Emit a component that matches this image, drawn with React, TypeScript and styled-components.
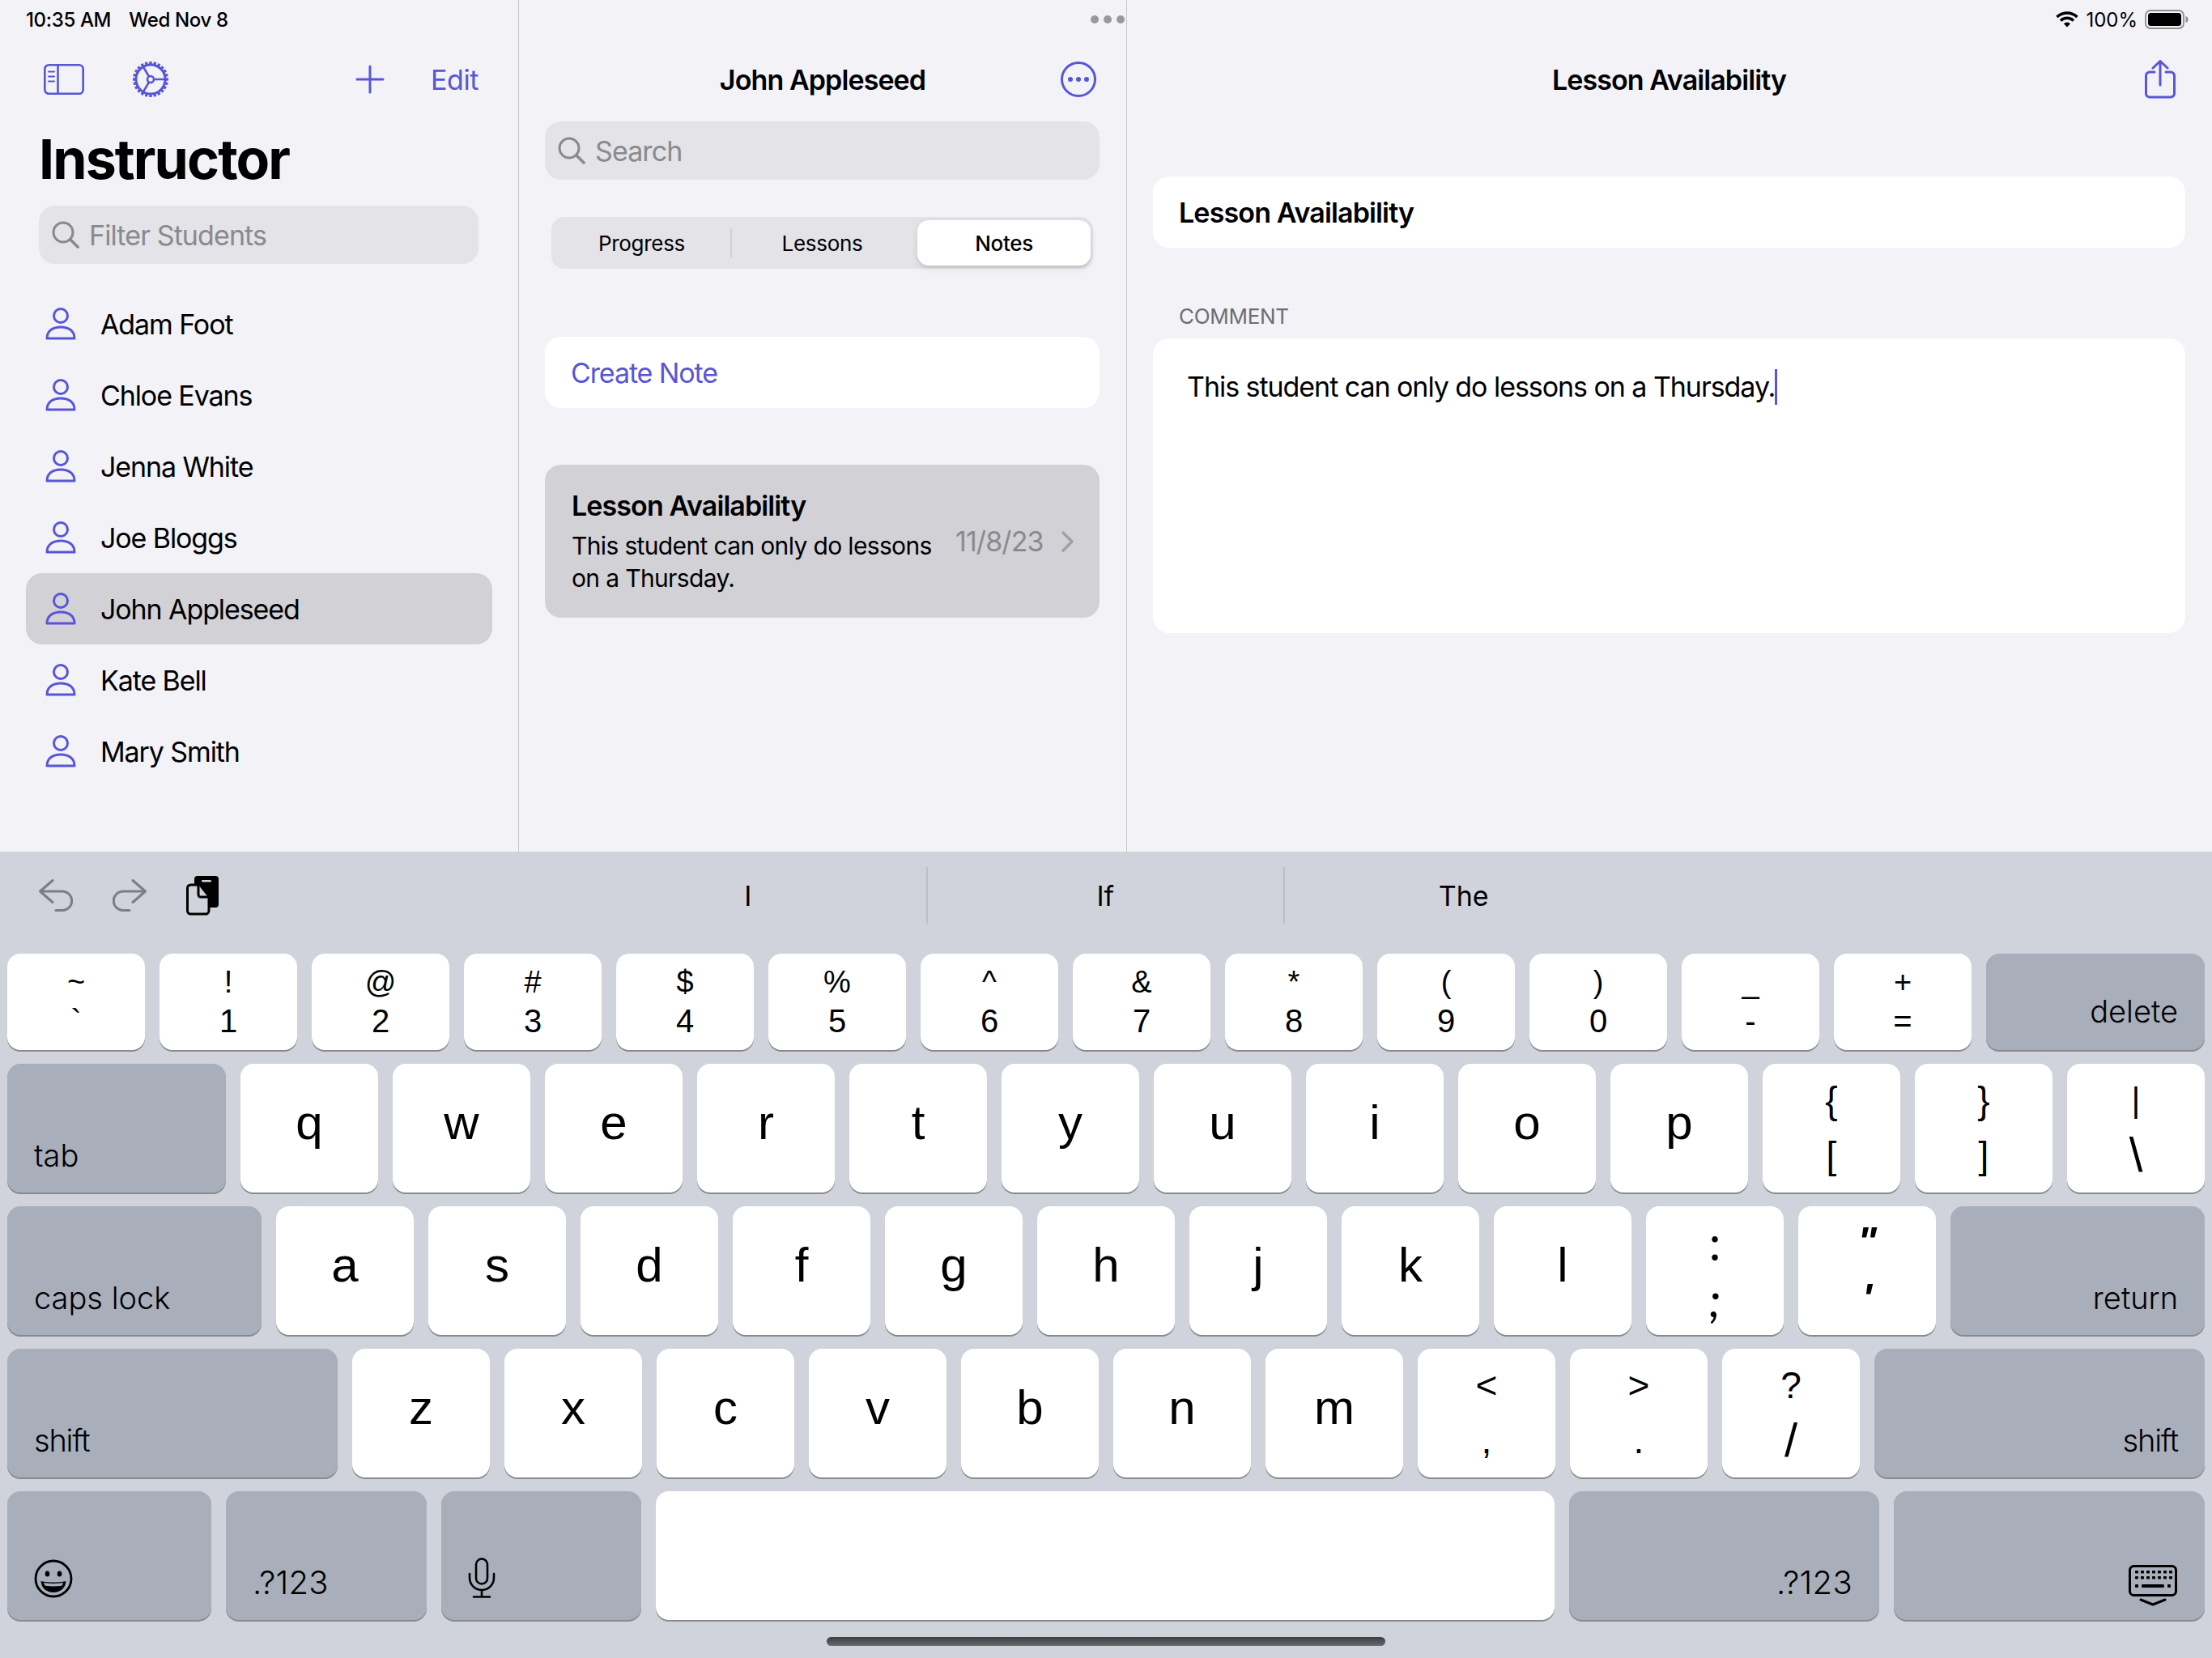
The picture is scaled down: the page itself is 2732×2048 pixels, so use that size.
import React from "react";
import styled, { createGlobalStyle } from "styled-components";

const BLUE = "#5856d6";
const HELVETICA = `"Liberation Sans", Arial, sans-serif`;

const students = ["Adam Foot", "Chloe Evans", "Jenna White", "Joe Bloggs", "John Appleseed", "Kate Bell", "Mary Smith"];

const GlobalStyle = createGlobalStyle`
  html, body {
    margin: 0;
    padding: 0;
    background: #f2f2f7;
  }
  body {
    font-family: Inter, "Liberation Sans", sans-serif;
    color: #000;
  }
  * {
    box-sizing: border-box;
  }
`;

const Screen = styled.div`
  position: relative;
  width: 2732px;
  height: 2048px;
  overflow: hidden;
  display: flex;
  flex-direction: column;
  background: #f2f2f7;
`;

const StatusBar = styled.div`
  position: absolute;
  top: 0;
  left: 0;
  right: 0;
  height: 48px;
  padding: 0 29px 0 32px;
  display: grid;
  grid-template-columns: 1fr auto 1fr;
  align-items: center;
  font-size: 24px;
`;

const StatusLeft = styled.div`
  display: flex;
  gap: 22px;
  font-weight: 500;
  letter-spacing: -0.35px;
`;

const StatusRight = styled.div`
  display: flex;
  justify-content: flex-end;
  align-items: center;
  gap: 9px;
`;

const Dots = styled.div`
  display: flex;
  gap: 6px;
`;

const Dot = styled.span`
  width: 10px;
  height: 10px;
  border-radius: 50%;
  background: #98989d;
`;

const Panes = styled.div`
  height: 1052px;
  display: flex;
`;

const Sidebar = styled.section`
  width: 641px;
  border-right: 1px solid #c6c6c8;
`;

const Middle = styled.section`
  width: 751px;
  border-right: 1px solid #c6c6c8;
`;

const Detail = styled.section`
  flex: 1;
  padding: 0 33px 0 32px;
`;

const NavBar = styled.div`
  height: 68px;
  margin-top: 64px;
  display: flex;
  align-items: center;
`;

const SidebarNav = styled(NavBar)`
  padding: 0 49px 0 54px;
`;

const CenterNav = styled(NavBar)`
  position: relative;
  justify-content: center;
`;

const NavTitle = styled.div`
  font-size: 34px;
  font-weight: 600;
  letter-spacing: -0.9px;
`;

const NavEnd = styled.div<{ $right: number }>`
  position: absolute;
  top: 50%;
  transform: translateY(-50%);
  display: flex;
  right: ${(p) => p.$right}px;
`;

const GearSlot = styled.div`
  display: flex;
  margin-left: 59px;
`;

const Spacer = styled.div`
  flex: 1;
`;

const EditLabel = styled.span`
  margin-left: 57px;
  font-size: 34px;
  color: ${BLUE};
  letter-spacing: -0.4px;
`;

const LargeTitle = styled.h1`
  margin: 0;
  height: 122px;
  padding: 28px 0 0 48px;
  font-size: 68px;
  line-height: 72px;
  font-weight: 700;
  letter-spacing: -1.9px;
`;

const SearchField = styled.div<{ $margin: string }>`
  height: 72px;
  margin: ${(p) => p.$margin};
  padding-left: 16px;
  display: flex;
  align-items: center;
  gap: 12px;
  border-radius: 20px;
  background: #e3e3e8;
  color: #8a8a8e;
  font-size: 34px;
  letter-spacing: -0.9px;
`;

const StudentList = styled.div`
  margin: 30px 32px 0;
`;

const StudentRow = styled.div<{ $selected?: boolean }>`
  height: 88px;
  padding-left: 23px;
  display: flex;
  align-items: center;
  gap: 29px;
  border-radius: 20px;
  font-size: 34px;
  letter-spacing: -1.1px;
  background: ${(p) => (p.$selected ? "#d1d1d6" : "transparent")};
`;

const Segments = styled.div`
  height: 64px;
  margin: 46px 41px 0 40px;
  display: grid;
  grid-template-columns: 1fr 1fr 1fr;
  align-items: stretch;
  border-radius: 16px;
  background: #e3e3e8;
`;

const Segment = styled.div<{ $active?: boolean; $divided?: boolean }>`
  position: relative;
  display: flex;
  align-items: center;
  justify-content: center;
  margin: ${(p) => (p.$active ? "4px 3px 4px 6px" : "0")};
  border-radius: 14px;
  font-size: 26px;
  font-weight: ${(p) => (p.$active ? 500 : 400)};
  letter-spacing: -0.3px;
  background: ${(p) => (p.$active ? "#fff" : "transparent")};
  box-shadow: ${(p) => (p.$active ? "0 3px 8px rgba(0,0,0,.12), 0 3px 1px rgba(0,0,0,.04)" : "none")};

  ${(p) =>
    p.$divided &&
    `&::after {
      content: "";
      position: absolute;
      right: 0;
      top: 14px;
      bottom: 14px;
      width: 2px;
      background: #cfcfd4;
    }`}
`;

const CreateCard = styled.div`
  height: 88px;
  margin: 84px 33px 0 32px;
  padding-left: 32px;
  display: flex;
  align-items: center;
  border-radius: 20px;
  background: #fff;
  color: ${BLUE};
  font-size: 34px;
  letter-spacing: -1.1px;
`;

const NoteCard = styled.div`
  height: 189px;
  margin: 70px 33px 0 32px;
  padding: 0 30px 0 33px;
  display: flex;
  align-items: center;
  border-radius: 20px;
  background: #d1d1d6;
`;

const NoteText = styled.div`
  width: 474px;
`;

const NoteTitle = styled.div`
  font-size: 34px;
  line-height: 44px;
  font-weight: 600;
  letter-spacing: -0.9px;
  margin: -1px 0 7px;
`;

const NoteBody = styled.div`
  font-size: 30px;
  line-height: 40px;
  letter-spacing: -0.65px;
  white-space: pre-line;
`;

const NoteDate = styled.div`
  flex: 1;
  font-size: 34px;
  color: #8a8a8e;
  letter-spacing: -0.9px;
`;

const TitleCard = styled.div`
  height: 88px;
  margin-top: 86px;
  padding-left: 32px;
  display: flex;
  align-items: center;
  border-radius: 20px;
  background: #fff;
  font-size: 34px;
  font-weight: 600;
  letter-spacing: -0.85px;
`;

const SectionLabel = styled.div`
  height: 112px;
  padding: 70px 0 0 32px;
  font-size: 26px;
  line-height: 30px;
  letter-spacing: -0.3px;
  color: #6d6d72;
`;

const CommentCard = styled.div`
  height: 364px;
  padding: 38px 42px;
  border-radius: 20px;
  background: #fff;
  font-size: 34px;
  line-height: 44px;
  letter-spacing: -1.05px;
`;

const Caret = styled.span`
  display: inline-block;
  width: 3px;
  height: 44px;
  vertical-align: top;
  background: ${BLUE};
`;

const Keyboard = styled.section`
  position: relative;
  flex: 1;
  background: #d0d3db;
  padding-left: 9px;
`;

const Assistant = styled.div`
  height: 126px;
  padding-bottom: 18px;
  display: flex;
  align-items: center;
`;

const ToolIcons = styled.div`
  width: 695px;
  padding-left: 39px;
  display: flex;
  align-items: center;
  gap: 49px;
`;

const Suggestion = styled.div<{ $divided?: boolean }>`
  width: 441.5px;
  height: 70px;
  display: flex;
  align-items: center;
  justify-content: center;
  font-size: 34px;
  border-right: ${(p) => (p.$divided ? "2px solid #bcbfc8" : "none")};
`;

const KeyRows = styled.div`
  display: flex;
  flex-direction: column;
  gap: 17px;
`;

const KeyRow = styled.div<{ $height: number }>`
  height: ${(p) => p.$height}px;
  display: flex;
  gap: 18px;
`;

const Key = styled.div<{ $width?: number; $dark?: boolean; $end?: boolean }>`
  width: ${(p) => p.$width ?? 170}px;
  flex: none;
  display: flex;
  border-radius: 16px;
  background: ${(p) => (p.$dark ? "#a9aebb" : "#fff")};
  box-shadow: 0 2px 0 #898a8f;
`;

const LetterKey = styled(Key)`
  align-items: center;
  justify-content: center;
  font-family: ${HELVETICA};
  font-size: 60px;
  padding-bottom: 14px;
`;

const PairKey = styled(Key)<{ $line: number }>`
  flex-direction: column;
  align-items: center;
  justify-content: center;
  padding-bottom: 2px;
  font-family: ${HELVETICA};
  line-height: ${(p) => p.$line}px;
`;

const Glyph = styled.span<{ $size: number; $bold?: boolean; $slant?: boolean; $round?: boolean }>`
  font-family: ${(p) => (p.$round ? `Lato, ${HELVETICA}` : "inherit")};
  font-size: ${(p) => p.$size}px;
  font-weight: ${(p) => (p.$bold ? 700 : 400)};
  font-style: ${(p) => (p.$slant ? "italic" : "normal")};
`;

const LabelKey = styled(Key)<{ $bottom?: number }>`
  align-items: flex-end;
  justify-content: ${(p) => (p.$end ? "flex-end" : "flex-start")};
  padding: 0 33px ${(p) => p.$bottom ?? 23}px;
  font-size: 38px;
  line-height: 46px;
  font-weight: 300;
`;

const NumberLabel = styled.span`
  font-size: 40px;
  letter-spacing: 0.3px;
`;

const ShiftLabel = styled.span`
  letter-spacing: -1.2px;
`;

const IconKey = styled(Key)<{ $bottom: number }>`
  align-items: flex-end;
  justify-content: ${(p) => (p.$end ? "flex-end" : "flex-start")};
  padding: 0 34px ${(p) => p.$bottom}px 33px;
`;

const HomeIndicator = styled.div`
  position: absolute;
  left: 1021px;
  bottom: 15px;
  width: 690px;
  height: 11px;
  border-radius: 6px;
  background: linear-gradient(#3d3d40, #68696d);
`;

const Chevron = () => (
  <svg width="18" height="28" viewBox="0 0 18 28" fill="none" stroke="#a0a0a5" strokeWidth="3.4" strokeLinecap="round" strokeLinejoin="round">
    <path d="M3 3l11 11L3 25" />
  </svg>
);

const SearchIcon = () => (
  <svg width="34" height="34" viewBox="0 0 34 34" fill="none" stroke="#8a8a8e" strokeWidth="3" strokeLinecap="round">
    <circle cx="14" cy="14" r="12" />
    <path d="M23 23l9 9" strokeWidth="3.6" />
  </svg>
);

const PersonIcon = () => (
  <svg width="40" height="40" viewBox="0 0 40 40" fill="none" stroke={BLUE} strokeWidth="3">
    <ellipse cx="20" cy="10" rx="8.5" ry="8.5" />
    <path d="M3 38c0-10 8-14 17-14s17 4 17 14z" strokeLinejoin="round" />
  </svg>
);

const SidebarIcon = () => (
  <svg width="50" height="38" viewBox="0 0 50 38" fill="none" stroke={BLUE} strokeWidth="2.6">
    <rect x="1.3" y="1.3" width="47.4" height="35.4" rx="5" />
    <path d="M17.5 1.5v35" />
    <path d="M6 9.5h7M6 15.5h7M6 21.5h7" strokeWidth="2" strokeLinecap="round" />
  </svg>
);

const GearIcon = () => (
  <svg width="46" height="46" viewBox="0 0 46 46" fill="none" stroke={BLUE}>
    <circle cx="23" cy="23" r="18" strokeWidth="3" />
    {Array.from({ length: 24 }, (_, i) => (
      <path key={i} d="M23 5V1" strokeWidth="3.4" transform={`rotate(${i * 15} 23 23)`} />
    ))}
    <circle cx="23" cy="23" r="4" strokeWidth="2.6" />
    <path d="M27 23h15M21 19.500L13 6M21 26.500L13 40" strokeWidth="2.6" />
  </svg>
);

const PlusIcon = () => (
  <svg width="36" height="36" viewBox="0 0 36 36" fill="none" stroke={BLUE} strokeWidth="3" strokeLinecap="round">
    <path d="M18 2v32M2 18h32" />
  </svg>
);

const MoreIcon = () => (
  <svg width="44" height="44" viewBox="0 0 44 44" fill="none">
    <circle cx="22" cy="22" r="20.500" stroke={BLUE} strokeWidth="3" />
    <circle cx="12" cy="22" r="3" fill={BLUE} />
    <circle cx="22" cy="22" r="3" fill={BLUE} />
    <circle cx="32" cy="22" r="3" fill={BLUE} />
  </svg>
);

const ShareIcon = () => (
  <svg width="38" height="48" viewBox="0 0 38 48" fill="none" stroke={BLUE} strokeWidth="3" strokeLinecap="round" strokeLinejoin="round">
    <path d="M12 15H6a4.500 4.500 0 0 0-4.500 4.500v22A4.500 4.500 0 0 0 6 46h26a4.500 4.500 0 0 0 4.500-4.500v-22A4.500 4.500 0 0 0 32 15h-6" />
    <path d="M19 31V2M10 10l9-8.500 9 8.500" />
  </svg>
);

const WifiIcon = () => (
  <svg width="28" height="20" viewBox="0 0 28 20" fill="none" stroke="#000" strokeWidth="3.400">
    <path d="M1.500 7a18 18 0 0 1 25 0" />
    <path d="M6 11.500a11.500 11.500 0 0 1 16 0" />
    <path d="M14 19.500l-4-4.200a5.600 5.600 0 0 1 8 0z" fill="#000" stroke="none" />
  </svg>
);

const BatteryIcon = () => (
  <svg width="54" height="24" viewBox="0 0 54 24" fill="none">
    <rect x="1" y="1" width="47" height="22" rx="6" stroke="#8e8e93" strokeWidth="1.800" />
    <rect x="4" y="4" width="41" height="16" rx="3.500" fill="#000" />
    <path d="M50.500 8v8c2-.6 3-2 3-4s-1-3.400-3-4z" fill="#8e8e93" />
  </svg>
);

const UndoIcon = ({ flip }: { flip?: boolean }) => (
  <svg width="42" height="40" viewBox="0 0 42 40" fill="none" stroke="#7c7e84" strokeWidth="3" strokeLinecap="round" strokeLinejoin="round" transform={flip ? "scale(-1 1)" : undefined}>
    <path d="M17 1.500L1.500 15 17 28.500M1.500 15H29a11.500 11.500 0 0 1 0 23.500h-8" />
  </svg>
);

const PasteIcon = () => (
  <svg width="42" height="50" viewBox="0 0 42 50" fill="none">
    <rect x="10" y="1" width="30" height="39" rx="4" fill="#000" />
    <rect x="19" y="6" width="12" height="2.600" rx="1.300" fill="#d0d3db" />
    <path d="M5.500 12H17l11 14v18a4 4 0 0 1-4 4H5.500a4 4 0 0 1-4-4V16a4 4 0 0 1 4-4z" fill="#d0d3db" stroke="#000" strokeWidth="3" strokeLinejoin="round" />
    <path d="M15 12v12a3 3 0 0 0 3 3h10" stroke="#000" strokeWidth="3" />
  </svg>
);

const EmojiIcon = () => (
  <svg width="48" height="48" viewBox="0 0 48 48" fill="none">
    <circle cx="24" cy="24" r="22" stroke="#000" strokeWidth="2.800" />
    <ellipse cx="16.500" cy="18" rx="2.800" ry="3.600" fill="#000" />
    <ellipse cx="31.500" cy="18" rx="2.800" ry="3.600" fill="#000" />
    <path d="M8.500 27c10 2 21 2 31 0-.5 8.500-7 14-15.500 14S9 35.500 8.500 27z" fill="#000" />
    <path d="M12 29c8 1.400 16 1.400 24 0-.4 1.500-1 2.700-1.800 3.800-6.600 1-13.800 1-20.400 0-.8-1.100-1.400-2.300-1.800-3.800z" fill="#a9aebb" />
  </svg>
);

const MicIcon = () => (
  <svg width="34" height="50" viewBox="0 0 34 50" fill="none" stroke="#000" strokeWidth="2.600" strokeLinecap="round">
    <rect x="10" y="1.500" width="14" height="31" rx="7" />
    <path d="M2 20v5a15 15 0 0 0 30 0v-5M17 40v8M7 48.500h20" />
  </svg>
);

const KeyboardIcon = () => (
  <svg width="60" height="51" viewBox="0 0 60 51" fill="none">
    <rect x="1.500" y="1.500" width="57" height="36" rx="5" stroke="#000" strokeWidth="3" />
    {[9, 16].map((y) =>
      [8, 15, 22, 29, 36, 43, 50].map((x) => <rect key={`${x}-${y}`} x={x} y={y - 2} width="4" height="3.600" rx="1" fill="#000" />)
    )}
    <rect x="16" y="24" width="28" height="4" rx="1.500" fill="#000" />
    <rect x="8" y="24" width="4" height="4" rx="1" fill="#000" />
    <rect x="48" y="24" width="4" height="4" rx="1" fill="#000" />
    <path d="M15 43l15 6 15-6" stroke="#000" strokeWidth="3" strokeLinecap="round" strokeLinejoin="round" />
  </svg>
);

type GlyphSpec = { c: string; size: number; bold?: boolean; slant?: boolean; round?: boolean };

const g = (c: string, size: number, opts: Partial<GlyphSpec> = {}): GlyphSpec => ({ c, size, ...opts });

const numberKeys = [
  ["~", "`"], ["!", "1"], ["@", "2"], ["#", "3"], ["$", "4"], ["%", "5"], ["^", "6"],
  ["&", "7"], ["*", "8"], ["(", "9"], [")", "0"], ["_", "-"], ["+", "="],
].map(([up, down]) => [g(up, 38), g(down, 40)]);

const bracketKeys = [
  [g("{", 46), g("[", 46)],
  [g("}", 46), g("]", 46)],
  [g("|", 42), g("\\", 60)],
];

const homeEndKeys = [
  [g(":", 60, { round: true }), g(";", 60, { round: true, slant: true })],
  [g("\"", 50, { bold: true, slant: true }), g("'", 50, { bold: true, slant: true })],
];

const bottomEndKeys = [
  [g("<", 46), g(",", 46)],
  [g(">", 46), g(".", 46)],
  [g("?", 46), g("/", 58)],
];

const Pair = ({ glyphs, line }: { glyphs: GlyphSpec[]; line: number }) => (
  <PairKey $line={line}>
    {glyphs.map((x) => (
      <Glyph key={x.c} $size={x.size} $bold={x.bold} $slant={x.slant} $round={x.round}>
        {x.c}
      </Glyph>
    ))}
  </PairKey>
);

export default function App() {
  return (
    <Screen>
      <GlobalStyle />
      <Panes>
        <Sidebar>
          <SidebarNav>
            <SidebarIcon />
            <GearSlot>
              <GearIcon />
            </GearSlot>
            <Spacer />
            <PlusIcon />
            <EditLabel>Edit</EditLabel>
          </SidebarNav>
          <LargeTitle>Instructor</LargeTitle>
          <SearchField $margin="0 49px 0 48px">
            <SearchIcon />
            Filter Students
          </SearchField>
          <StudentList>
            {students.map((name) => (
              <StudentRow key={name} $selected={name === "John Appleseed"}>
                <PersonIcon />
                {name}
              </StudentRow>
            ))}
          </StudentList>
        </Sidebar>

        <Middle>
          <CenterNav>
            <NavTitle>John Appleseed</NavTitle>
            <NavEnd $right={37}>
              <MoreIcon />
            </NavEnd>
          </CenterNav>
          <SearchField $margin="18px 33px 0 32px">
            <SearchIcon />
            Search
          </SearchField>
          <Segments>
            <Segment $divided>Progress</Segment>
            <Segment>Lessons</Segment>
            <Segment $active>Notes</Segment>
          </Segments>
          <CreateCard>Create Note</CreateCard>
          <NoteCard>
            <NoteText>
              <NoteTitle>Lesson Availability</NoteTitle>
              <NoteBody>{"This student can only do lessons\non a Thursday."}</NoteBody>
            </NoteText>
            <NoteDate>11/8/23</NoteDate>
            <Chevron />
          </NoteCard>
        </Middle>

        <Detail>
          <CenterNav>
            <NavTitle>Lesson Availability</NavTitle>
            <NavEnd $right={12}>
              <ShareIcon />
            </NavEnd>
          </CenterNav>
          <TitleCard>Lesson Availability</TitleCard>
          <SectionLabel>COMMENT</SectionLabel>
          <CommentCard>
            This student can only do lessons on a Thursday.
            <Caret />
          </CommentCard>
        </Detail>
      </Panes>

      <Keyboard>
        <Assistant>
          <ToolIcons>
            <UndoIcon />
            <UndoIcon flip />
            <PasteIcon />
          </ToolIcons>
          <Suggestion $divided>I</Suggestion>
          <Suggestion $divided>If</Suggestion>
          <Suggestion>The</Suggestion>
        </Assistant>
        <KeyRows>
          <KeyRow $height={119}>
            {numberKeys.map((k) => (
              <Pair key={k[0].c} glyphs={k} line={48} />
            ))}
            <LabelKey $dark $end $width={270} $bottom={25}>delete</LabelKey>
          </KeyRow>
          <KeyRow $height={159}>
            <LabelKey $dark $width={270}>tab</LabelKey>
            {"qwertyuiop".split("").map((k) => (
              <LetterKey key={k}>{k}</LetterKey>
            ))}
            {bracketKeys.map((k) => (
              <Pair key={k[0].c} glyphs={k} line={68} />
            ))}
          </KeyRow>
          <KeyRow $height={159}>
            <LabelKey $dark $width={314}>caps lock</LabelKey>
            {"asdfghjkl".split("").map((k) => (
              <LetterKey key={k}>{k}</LetterKey>
            ))}
            {homeEndKeys.map((k) => (
              <Pair key={k[0].c} glyphs={k} line={70} />
            ))}
            <LabelKey $dark $end $width={314}>return</LabelKey>
          </KeyRow>
          <KeyRow $height={159}>
            <LabelKey $dark $width={408}>
              <ShiftLabel>shift</ShiftLabel>
            </LabelKey>
            {"zxcvbnm".split("").map((k) => (
              <LetterKey key={k}>{k}</LetterKey>
            ))}
            {bottomEndKeys.map((k) => (
              <Pair key={k[0].c} glyphs={k} line={68} />
            ))}
            <LabelKey $dark $end $width={408}>
              <ShiftLabel>shift</ShiftLabel>
            </LabelKey>
          </KeyRow>
          <KeyRow $height={159}>
            <IconKey $dark $width={252} $bottom={27}>
              <EmojiIcon />
            </IconKey>
            <LabelKey $dark $width={248}>
              <NumberLabel>.?123</NumberLabel>
            </LabelKey>
            <IconKey $dark $width={247} $bottom={27}>
              <MicIcon />
            </IconKey>
            <Key $width={1110} />
            <LabelKey $dark $end $width={383}>
              <NumberLabel>.?123</NumberLabel>
            </LabelKey>
            <IconKey $dark $end $width={384} $bottom={17}>
              <KeyboardIcon />
            </IconKey>
          </KeyRow>
        </KeyRows>
        <HomeIndicator />
      </Keyboard>

      <StatusBar>
        <StatusLeft>
          <span>10:35 AM</span>
          <span>Wed Nov 8</span>
        </StatusLeft>
        <Dots>
          <Dot />
          <Dot />
          <Dot />
        </Dots>
        <StatusRight>
          <WifiIcon />
          <span>100%</span>
          <BatteryIcon />
        </StatusRight>
      </StatusBar>
    </Screen>
  );
}
